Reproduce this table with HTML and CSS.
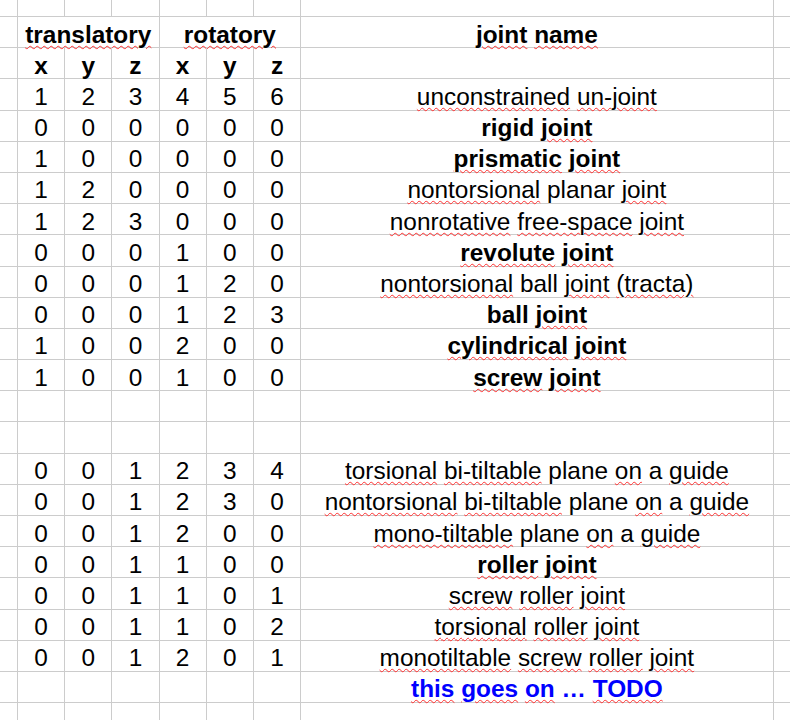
FILE: index.html
```html
<!DOCTYPE html>
<html>
<head>
<meta charset="utf-8">
<link rel="stylesheet" href="styles.css">
</head>
<body>
<div class="sheet">
  <div class="row top"><div class="c"></div><div class="c"></div><div class="c"></div><div class="c"></div><div class="c"></div><div class="c"></div><div class="c"></div><div class="c"></div><div class="c last"></div></div>
  <div class="row"><div class="c"></div><div class="c b span3"><span class="sp">translatory</span></div><div class="c b span3"><span class="sp">rotatory</span></div><div class="c b"><span class="sp">joint</span> <span class="sp">name</span></div><div class="c last"></div></div>
  <div class="row"><div class="c"></div><div class="c b">x</div><div class="c b">y</div><div class="c b">z</div><div class="c b">x</div><div class="c b">y</div><div class="c b">z</div><div class="c"></div><div class="c last"></div></div>
  <div class="row"><div class="c"></div><div class="c">1</div><div class="c">2</div><div class="c">3</div><div class="c">4</div><div class="c">5</div><div class="c">6</div><div class="c"><span class="sp">unconstrained</span> <span class="sp">un-joint</span></div><div class="c last"></div></div>
  <div class="row"><div class="c"></div><div class="c">0</div><div class="c">0</div><div class="c">0</div><div class="c">0</div><div class="c">0</div><div class="c">0</div><div class="c b">rigid <span class="sp">joint</span></div><div class="c last"></div></div>
  <div class="row"><div class="c"></div><div class="c">1</div><div class="c">0</div><div class="c">0</div><div class="c">0</div><div class="c">0</div><div class="c">0</div><div class="c b"><span class="sp">prismatic</span> <span class="sp">joint</span></div><div class="c last"></div></div>
  <div class="row"><div class="c"></div><div class="c">1</div><div class="c">2</div><div class="c">0</div><div class="c">0</div><div class="c">0</div><div class="c">0</div><div class="c"><span class="sp">nontorsional</span> planar <span class="sp">joint</span></div><div class="c last"></div></div>
  <div class="row"><div class="c"></div><div class="c">1</div><div class="c">2</div><div class="c">3</div><div class="c">0</div><div class="c">0</div><div class="c">0</div><div class="c"><span class="sp">nonrotative</span> <span class="sp">free-space</span> <span class="sp">joint</span></div><div class="c last"></div></div>
  <div class="row"><div class="c"></div><div class="c">0</div><div class="c">0</div><div class="c">0</div><div class="c">1</div><div class="c">0</div><div class="c">0</div><div class="c b"><span class="sp">revolute</span> <span class="sp">joint</span></div><div class="c last"></div></div>
  <div class="row"><div class="c"></div><div class="c">0</div><div class="c">0</div><div class="c">0</div><div class="c">1</div><div class="c">2</div><div class="c">0</div><div class="c"><span class="sp">nontorsional</span> ball <span class="sp">joint</span> <span class="sp">(tracta)</span></div><div class="c last"></div></div>
  <div class="row"><div class="c"></div><div class="c">0</div><div class="c">0</div><div class="c">0</div><div class="c">1</div><div class="c">2</div><div class="c">3</div><div class="c b">ball <span class="sp">joint</span></div><div class="c last"></div></div>
  <div class="row"><div class="c"></div><div class="c">1</div><div class="c">0</div><div class="c">0</div><div class="c">2</div><div class="c">0</div><div class="c">0</div><div class="c b"><span class="sp">cylindrical</span> <span class="sp">joint</span></div><div class="c last"></div></div>
  <div class="row"><div class="c"></div><div class="c">1</div><div class="c">0</div><div class="c">0</div><div class="c">1</div><div class="c">0</div><div class="c">0</div><div class="c b"><span class="sp">screw</span> <span class="sp">joint</span></div><div class="c last"></div></div>
  <div class="row"><div class="c"></div><div class="c"></div><div class="c"></div><div class="c"></div><div class="c"></div><div class="c"></div><div class="c"></div><div class="c"></div><div class="c last"></div></div>
  <div class="row"><div class="c"></div><div class="c"></div><div class="c"></div><div class="c"></div><div class="c"></div><div class="c"></div><div class="c"></div><div class="c"></div><div class="c last"></div></div>
  <div class="row"><div class="c"></div><div class="c">0</div><div class="c">0</div><div class="c">1</div><div class="c">2</div><div class="c">3</div><div class="c">4</div><div class="c"><span class="sp">torsional</span> <span class="sp">bi-tiltable</span> plane <span class="sp">on</span> a <span class="sp">guide</span></div><div class="c last"></div></div>
  <div class="row"><div class="c"></div><div class="c">0</div><div class="c">0</div><div class="c">1</div><div class="c">2</div><div class="c">3</div><div class="c">0</div><div class="c"><span class="sp">nontorsional</span> <span class="sp">bi-tiltable</span> plane <span class="sp">on</span> a <span class="sp">guide</span></div><div class="c last"></div></div>
  <div class="row"><div class="c"></div><div class="c">0</div><div class="c">0</div><div class="c">1</div><div class="c">2</div><div class="c">0</div><div class="c">0</div><div class="c"><span class="sp">mono-tiltable</span> plane <span class="sp">on</span> a <span class="sp">guide</span></div><div class="c last"></div></div>
  <div class="row"><div class="c"></div><div class="c">0</div><div class="c">0</div><div class="c">1</div><div class="c">1</div><div class="c">0</div><div class="c">0</div><div class="c b"><span class="sp">roller</span> <span class="sp">joint</span></div><div class="c last"></div></div>
  <div class="row"><div class="c"></div><div class="c">0</div><div class="c">0</div><div class="c">1</div><div class="c">1</div><div class="c">0</div><div class="c">1</div><div class="c"><span class="sp">screw</span> <span class="sp">roller</span> <span class="sp">joint</span></div><div class="c last"></div></div>
  <div class="row"><div class="c"></div><div class="c">0</div><div class="c">0</div><div class="c">1</div><div class="c">1</div><div class="c">0</div><div class="c">2</div><div class="c"><span class="sp">torsional</span> <span class="sp">roller</span> <span class="sp">joint</span></div><div class="c last"></div></div>
  <div class="row"><div class="c"></div><div class="c">0</div><div class="c">0</div><div class="c">1</div><div class="c">2</div><div class="c">0</div><div class="c">1</div><div class="c"><span class="sp">monotiltable</span> <span class="sp">screw</span> <span class="sp">roller</span> <span class="sp">joint</span></div><div class="c last"></div></div>
  <div class="row"><div class="c"></div><div class="c"></div><div class="c"></div><div class="c"></div><div class="c"></div><div class="c"></div><div class="c"></div><div class="c b todo"><span class="sp">this</span> <span class="sp">goes</span> <span class="sp">on</span> … <span class="sp">TODO</span></div><div class="c last"></div></div>
  <div class="row"><div class="c"></div><div class="c"></div><div class="c"></div><div class="c"></div><div class="c"></div><div class="c"></div><div class="c"></div><div class="c"></div><div class="c last"></div></div>
</div>
</body>
</html>
```

FILE: styles.css
```css
html, body {
  margin: 0;
  padding: 0;
  background: #ffffff;
}
body {
  font-family: "Liberation Sans", Arial, sans-serif;
  font-size: 24.4px;
  color: #000000;
  overflow: hidden;
}
.sheet {
  width: 790px;
  height: 720px;
  overflow: hidden;
}
.row {
  display: grid;
  grid-template-columns: 18px repeat(6, 47.2px) 472.5px 1fr;
  height: 31.2px;
}
.row.top {
  height: 17px;
}
.c {
  box-sizing: border-box;
  border-right: 1px solid #cccccc;
  border-bottom: 1px solid #cccccc;
  display: block;
  text-align: center;
  padding-top: 5.5px;
  line-height: 24px;
  white-space: nowrap;
  overflow: visible;
  min-width: 0;
}
.c.last {
  border-right: none;
}
.span3 {
  grid-column: span 3;
}
.b {
  font-weight: bold;
}
.todo {
  color: #0000ff;
}
.sp {
  text-decoration-line: underline;
  text-decoration-style: wavy;
  text-decoration-color: #ff3030;
  text-decoration-thickness: 1px;
  text-underline-offset: 2px;
}
```
